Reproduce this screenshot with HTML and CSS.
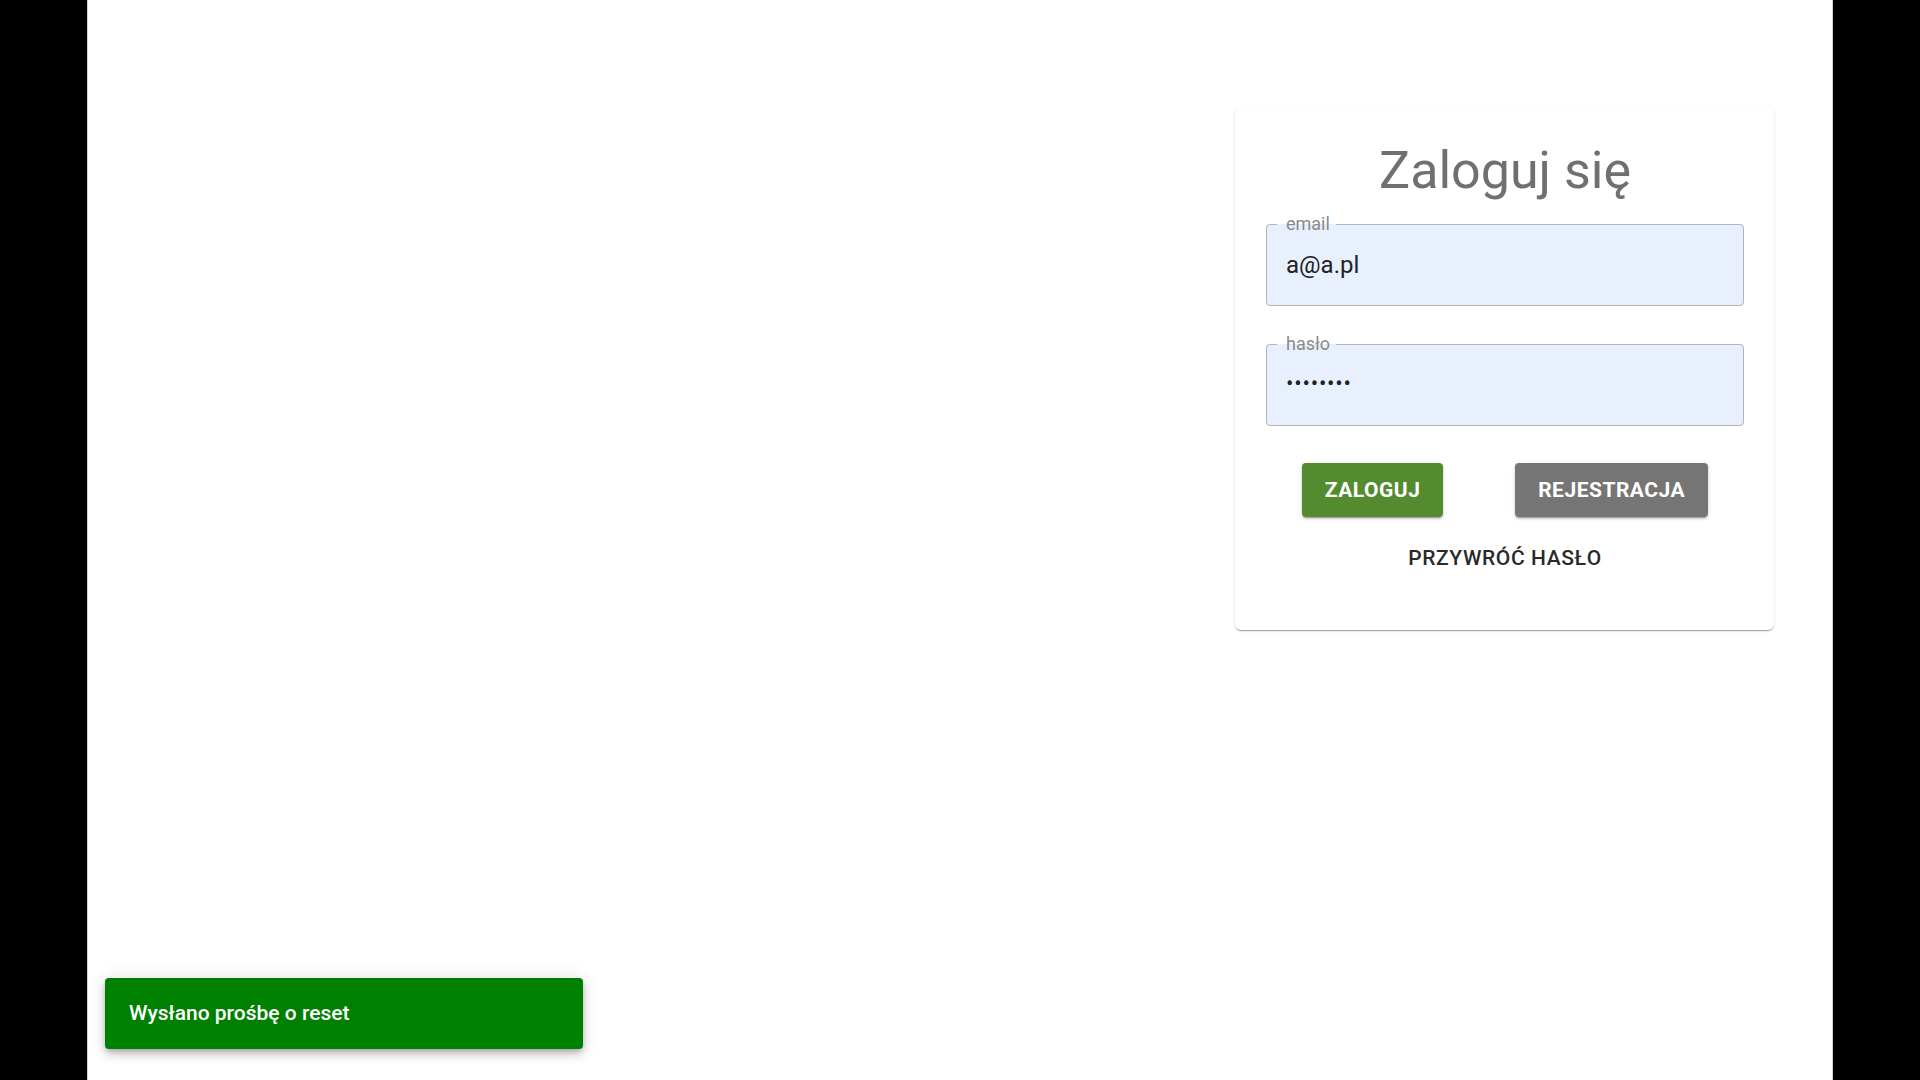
FILE: index.html
```html
<!DOCTYPE html>
<html lang="pl">
<head>
<meta charset="utf-8">
<title>Zaloguj się</title>
<link rel="stylesheet" href="styles.css">
</head>
<body>
<div class="screen">
  <main class="card">
    <h1 class="title">Zaloguj się</h1>
    <fieldset class="field">
      <legend class="field-label">email</legend>
      <input class="field-input field-email" type="text" value="a@a.pl">
    </fieldset>
    <fieldset class="field field-second">
      <legend class="field-label">hasło</legend>
      <input class="field-input field-password" type="password" value="12345678">
    </fieldset>
    <div class="actions">
      <button class="btn btn-primary" type="button">Zaloguj</button>
      <button class="btn btn-secondary" type="button">Rejestracja</button>
    </div>
    <button class="link-btn" type="button">Przywróć hasło</button>
  </main>
  <div class="snackbar">Wysłano prośbę o reset</div>
</div>
</body>
</html>
```
FILE: styles.css
```css
html, body {
  margin: 0;
  padding: 0;
  background: #000;
  height: 100%;
}
body {
  font-family: Roboto, "Liberation Sans", Arial, sans-serif;
}
.screen {
  position: relative;
  box-sizing: border-box;
  margin: 0 87px;
  height: 1080px;
  background: #fff;
  border-left: 1px solid #cfcfcf;
  border-right: 1px solid #cfcfcf;
  display: flex;
  justify-content: flex-end;
  align-items: flex-start;
  padding: 107px 58px 0 0;
}
.card {
  box-sizing: border-box;
  width: 539px;
  padding: 34px 30px 60px 31px;
  background: #fff;
  border-radius: 6px;
  box-shadow: 0 2px 1px -1px rgba(0,0,0,.2), 0 1px 1px 0 rgba(0,0,0,.14), 0 1px 3px 0 rgba(0,0,0,.12);
  display: flex;
  flex-direction: column;
  align-items: stretch;
}
.title {
  margin: 0 0 13px 0;
  font-size: 52px;
  line-height: 60px;
  font-weight: 400;
  color: #707070;
  text-align: center;
}
.field {
  margin: 0;
  padding: 0 10px 0 10px;
  border: 1px solid #b4b4b8;
  border-radius: 4px;
  background: #e8f0fe;
  min-width: 0;
}
.field-second {
  margin-top: 28px;
}
.field-label {
  padding: 0 6px 0 9px;
  font-size: 18px;
  line-height: 20px;
  color: #8a8a8a;
}
.field-input {
  display: block;
  box-sizing: border-box;
  width: 100%;
  height: 71px;
  margin: 0;
  padding: 0 0 0 9px;
  border: none;
  outline: none;
  background: transparent;
  font-family: Roboto, "Liberation Sans", Arial, sans-serif;
  font-size: 24px;
  color: #222;
}
.field-email {
  padding-bottom: 10px;
}
.field-password {
  padding-bottom: 12px;
  font-size: 22px;
  letter-spacing: 0.8px;
}
.actions {
  display: flex;
  justify-content: space-around;
  margin-top: 37px;
}
.btn {
  height: 54px;
  padding: 0 23px;
  border: none;
  border-radius: 4px;
  font-family: Roboto, "Liberation Sans", Arial, sans-serif;
  font-size: 21px;
  font-weight: 700;
  letter-spacing: 0.5px;
  text-transform: uppercase;
  color: #fff;
  box-shadow: 0 3px 1px -2px rgba(0,0,0,.2), 0 2px 2px 0 rgba(0,0,0,.14), 0 1px 5px 0 rgba(0,0,0,.12);
  cursor: pointer;
}
.btn-primary {
  background: #558b2f;
}
.btn-secondary {
  background: #757575;
}
.link-btn {
  align-self: center;
  margin-top: 29px;
  padding: 0;
  border: none;
  background: transparent;
  font-family: Roboto, "Liberation Sans", Arial, sans-serif;
  font-size: 21px;
  line-height: 24px;
  font-weight: 500;
  letter-spacing: 0.6px;
  text-transform: uppercase;
  color: #2a2a2a;
  cursor: pointer;
}
.snackbar {
  position: absolute;
  left: 17px;
  bottom: 31px;
  box-sizing: border-box;
  width: 478px;
  height: 71px;
  padding: 0 24px 2px 24px;
  display: flex;
  align-items: center;
  background: #008000;
  border-radius: 4px;
  color: #fff;
  font-size: 21px;
  font-weight: 500;
  box-shadow: 0 3px 5px -1px rgba(0,0,0,.2), 0 6px 10px 0 rgba(0,0,0,.14), 0 1px 18px 0 rgba(0,0,0,.12);
}
```
